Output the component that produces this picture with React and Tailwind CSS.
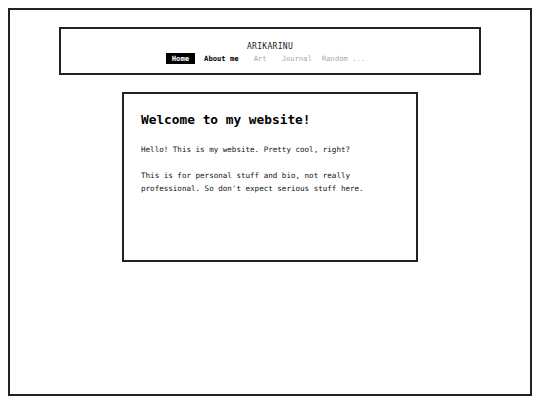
export default function App() {
  const nav = [
    { label: 'Home', cls: 'px-[6px] bg-black text-white font-bold' },
    { label: 'About me', cls: 'ml-[9px] text-black font-bold' },
    { label: 'Art', cls: 'ml-[15px] text-[#aaa]' },
    { label: 'Journal', cls: 'ml-[15px] text-[#aaa]' },
    { label: 'Random ...', cls: 'ml-[10px] text-[#aaa]' },
  ]

  return (
    <div className="bg-white min-h-screen pt-2 font-['DejaVu_Sans_Mono','Liberation_Mono',monospace] text-[#111]">
      <div className="mx-2 h-[388px] border-2 border-[#222] pt-[17px]">
        {/* Header */}
        <header className="mx-auto w-[422px] h-[48px] border-2 border-[#222] pt-[12px] flex flex-col items-center">
          <h1 className="text-[8px] leading-[11px] tracking-[0.3px] text-[#222]">ARIKARINU</h1>
          <nav className="mt-[1px] flex items-center pr-[9px]">
            {nav.map((item) => (
              <span
                key={item.label}
                className={`h-[11px] text-[7.2px] leading-[11px] whitespace-pre cursor-pointer ${item.cls}`}
              >
                {item.label}
              </span>
            ))}
          </nav>
        </header>

        {/* Main content */}
        <main className="mx-auto mt-[17px] w-[296px] h-[170px] border-2 border-[#222] px-[17px] pt-[16px]">
          <h2 className="text-[12.8px] leading-[19px] font-bold text-black">Welcome to my website!</h2>
          <p className="mt-[15px] text-[7.55px] leading-[12.75px]">Hello! This is my website. Pretty cool, right?</p>
          <p className="mt-[13px] text-[7.55px] leading-[12.75px]">
            This is for personal stuff and bio, not really professional. So don't expect serious stuff here.
          </p>
        </main>
      </div>
    </div>
  )
}
